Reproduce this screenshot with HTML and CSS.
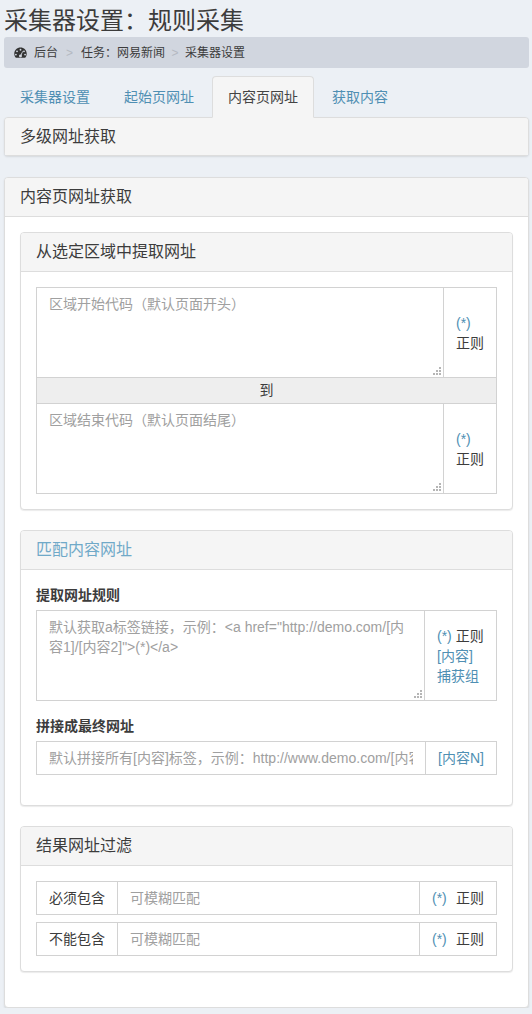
FILE: index.html
```html
<!DOCTYPE html>
<html lang="zh-CN">
<head>
<meta charset="utf-8">
<title>采集器设置：规则采集</title>
<link rel="stylesheet" href="styles.css">
</head>
<body>
<svg class="defs" width="0" height="0" aria-hidden="true"><defs><g id="grip"><rect x="6" y="0" width="2" height="2"/><rect x="3" y="3" width="2" height="2"/><rect x="6" y="3" width="2" height="2"/><rect x="0" y="6" width="2" height="2"/><rect x="3" y="6" width="2" height="2"/><rect x="6" y="6" width="2" height="2"/></g></defs></svg>
<h1 class="page-title">采集器设置<span class="punct">：</span>规则采集</h1>
<nav class="crumbs">
  <svg class="crumb-icon" viewBox="0 0 14 12" width="13" height="11" aria-hidden="true"><path fill-rule="evenodd" d="M7 .6C3.2.6.2 3.6.2 7.3c0 1.600.5 3 1.500 4.100.1.100.3.2.5.2h9.600c.2 0 .4-.1.5-.2 1-1.100 1.500-2.500 1.500-4.100C13.800 3.600 10.800.6 7 .6zM7 2a1 1 0 1 1 0 2 1 1 0 0 1 0-2zM3.200 3.700a1 1 0 1 1 0 2 1 1 0 0 1 0-2zM10.800 3.700a1 1 0 1 1 0 2 1 1 0 0 1 0-2zM2 7.300a1 1 0 1 1 0 2 1 1 0 0 1 0-2zM12 7.300a1 1 0 1 1 0 2 1 1 0 0 1 0-2zM9 4.600l.7.400-1.500 3.700c.3.300.4.600.4 1 0 .800-.7 1.400-1.600 1.400s-1.600-.6-1.600-1.400.7-1.500 1.600-1.500h.3z"/></svg>
  <span class="crumb crumb-first">后台</span>
  <span class="crumb-sep">&gt;</span>
  <span class="crumb">任务<span class="punct">：</span>网易新闻</span>
  <span class="crumb-sep">&gt;</span>
  <span class="crumb">采集器设置</span>
</nav>
<ul class="tabs">
  <li class="tab"><a href="#">采集器设置</a></li>
  <li class="tab"><a href="#">起始页网址</a></li>
  <li class="tab tab-active"><a href="#">内容页网址</a></li>
  <li class="tab"><a href="#">获取内容</a></li>
</ul>
<section class="panel panel-bare">
  <header class="panel-head"><h2>多级网址获取</h2></header>
</section>
<section class="panel">
  <header class="panel-head"><h2>内容页网址获取</h2></header>
  <div class="panel-body">
    <section class="panel inner">
      <header class="panel-head"><h2>从选定区域中提取网址</h2></header>
      <div class="panel-body">
        <div class="range">
          <div class="range-row">
            <div class="area-wrap">
              <textarea class="field area" placeholder="区域开始代码（默认页面开头）"></textarea>
              <svg class="grip" width="8" height="8" aria-hidden="true"><use href="#grip"/></svg>
            </div>
            <div class="addon addon-narrow"><a href="#">(*)</a><span>正则</span></div>
          </div>
          <div class="range-to">到</div>
          <div class="range-row">
            <div class="area-wrap">
              <textarea class="field area" placeholder="区域结束代码（默认页面结尾）"></textarea>
              <svg class="grip" width="8" height="8" aria-hidden="true"><use href="#grip"/></svg>
            </div>
            <div class="addon addon-narrow"><a href="#">(*)</a><span>正则</span></div>
          </div>
        </div>
      </div>
    </section>
    <section class="panel inner">
      <header class="panel-head"><h2 class="head-link">匹配内容网址</h2></header>
      <div class="panel-body">
        <div class="form-group">
          <label class="form-label">提取网址规则</label>
          <div class="box box-tall">
            <div class="area-wrap">
              <textarea class="field area" placeholder="默认获取a标签链接，示例：&lt;a href=&quot;http://demo.com/[内容1]/[内容2]&quot;&gt;(*)&lt;/a&gt;"></textarea>
              <svg class="grip" width="8" height="8" aria-hidden="true"><use href="#grip"/></svg>
            </div>
            <div class="addon addon-rule"><div><a href="#">(*)</a> <span>正则</span></div><a href="#">[内容]</a><a href="#">捕获组</a></div>
          </div>
        </div>
        <div class="form-group">
          <label class="form-label">拼接成最终网址</label>
          <div class="box">
            <input class="field" type="text" placeholder="默认拼接所有[内容]标签，示例：http://www.demo.com/[内容1]/[内容2]">
            <div class="addon addon-tag"><a href="#">[内容N]</a></div>
          </div>
        </div>
      </div>
    </section>
    <section class="panel inner">
      <header class="panel-head"><h2>结果网址过滤</h2></header>
      <div class="panel-body">
        <div class="box box-filter">
          <div class="addon addon-label">必须包含</div>
          <input class="field" type="text" placeholder="可模糊匹配">
          <div class="addon addon-regex"><a href="#">(*)</a><span>正则</span></div>
        </div>
        <div class="box">
          <div class="addon addon-label">不能包含</div>
          <input class="field" type="text" placeholder="可模糊匹配">
          <div class="addon addon-regex"><a href="#">(*)</a><span>正则</span></div>
        </div>
      </div>
    </section>
  </div>
</section>
</body>
</html>
```
FILE: styles.css
```css
* { box-sizing: border-box; }
html, body { margin: 0; }
body {
  padding: 0 3px 0 4px;
  background: #ecf0f5;
  color: #3c3c3c;
  font: 14px/20px "Liberation Sans", "Noto Sans CJK SC", sans-serif;
}
a { color: #4f8fb3; text-decoration: none; }
.punct { font-family: "Noto Sans CJK TC", sans-serif; }
.defs { position: absolute; }

.page-title {
  margin: 0;
  padding-top: 5px;
  height: 37px;
  font-size: 24px;
  line-height: 28px;
  font-weight: 400;
}

.crumbs {
  display: flex;
  align-items: center;
  height: 31px;
  padding: 0 10px;
  background: #d1d6df;
  border-radius: 3px;
  font-size: 12px;
}
.crumb-icon { fill: #333; margin-right: 7px; }
.crumb-sep { padding: 0 6.500px; color: #b4b9c2; font-size: 12px; }
.crumb-first + .crumb-sep { padding: 0 8px; }

.tabs {
  display: flex;
  gap: 2px;
  list-style: none;
  margin: 8px 0 -1px;
  padding: 0;
}
.tab a {
  display: block;
  padding: 10px 15px;
  border: 1px solid transparent;
  border-radius: 4px 4px 0 0;
}
.tab-active { position: relative; z-index: 1; }
.tab-active a {
  color: #444;
  background: #f5f5f5;
  border-color: #ddd #ddd #f5f5f5;
}

.panel {
  background: #fff;
  border: 1px solid #ddd;
  border-radius: 4px;
  box-shadow: 0 1px 2px rgba(0, 0, 0, .1);
}
.panel-bare { margin-bottom: 21px; background: #f5f5f5; }
.panel-head {
  padding: 10px 15px;
  background: #f5f5f5;
  border-bottom: 1px solid #ddd;
  border-radius: 3px 3px 0 0;
}
.panel-bare .panel-head { border-bottom: 0; padding-bottom: 9px; }
.panel-head h2 {
  margin: 0;
  font-size: 16px;
  line-height: 18px;
  font-weight: 400;
}
.panel-head .head-link { color: #70a9c8; }
.panel-body { padding: 15px; }
.inner { margin-bottom: 20px; box-shadow: 0 1px 1px rgba(0, 0, 0, .08); }

.field {
  flex: 1;
  min-width: 0;
  height: 100%;
  padding: 6px 12px;
  border: 0;
  outline: 0;
  background: #fff;
  color: #333;
  font: 14px/20px "Liberation Sans", "Noto Sans CJK TC", sans-serif;
}
.field::placeholder { color: #a0a0a0; opacity: 1; }
.area-wrap { position: relative; flex: 1; min-width: 0; }
.area { display: block; width: 100%; resize: none; }
.grip { position: absolute; right: 2px; bottom: 2px; fill: #b5b5b5; }

.addon {
  display: flex;
  flex-direction: column;
  justify-content: center;
  padding: 0 12px;
  background: #fff;
  border-left: 1px solid #d2d2d2;
}

.range { border: 1px solid #d2d2d2; }
.range-row { display: flex; height: 89px; }
.range-to {
  height: 27px;
  background: #eee;
  border-top: 1px solid #d2d2d2;
  border-bottom: 1px solid #d2d2d2;
  text-align: center;
  line-height: 25px;
}
.addon-narrow { flex: 0 0 53px; }

.form-group { margin-bottom: 15px; }
.form-label {
  display: block;
  margin-bottom: 5px;
  font-weight: 700;
}
.box {
  display: flex;
  height: 34px;
  border: 1px solid #d2d2d2;
}
.box-tall { height: 91px; }
.box-filter { margin-bottom: 7px; }
.addon-rule { flex: 0 0 72px; }
.addon-tag { flex: 0 0 70px; white-space: nowrap; }
.addon-label { flex: 0 0 81px; border-left: 0; border-right: 1px solid #d2d2d2; white-space: nowrap; }
.addon-regex {
  flex: 0 0 77px;
  flex-direction: row;
  justify-content: space-between;
  align-items: center;
}
```
